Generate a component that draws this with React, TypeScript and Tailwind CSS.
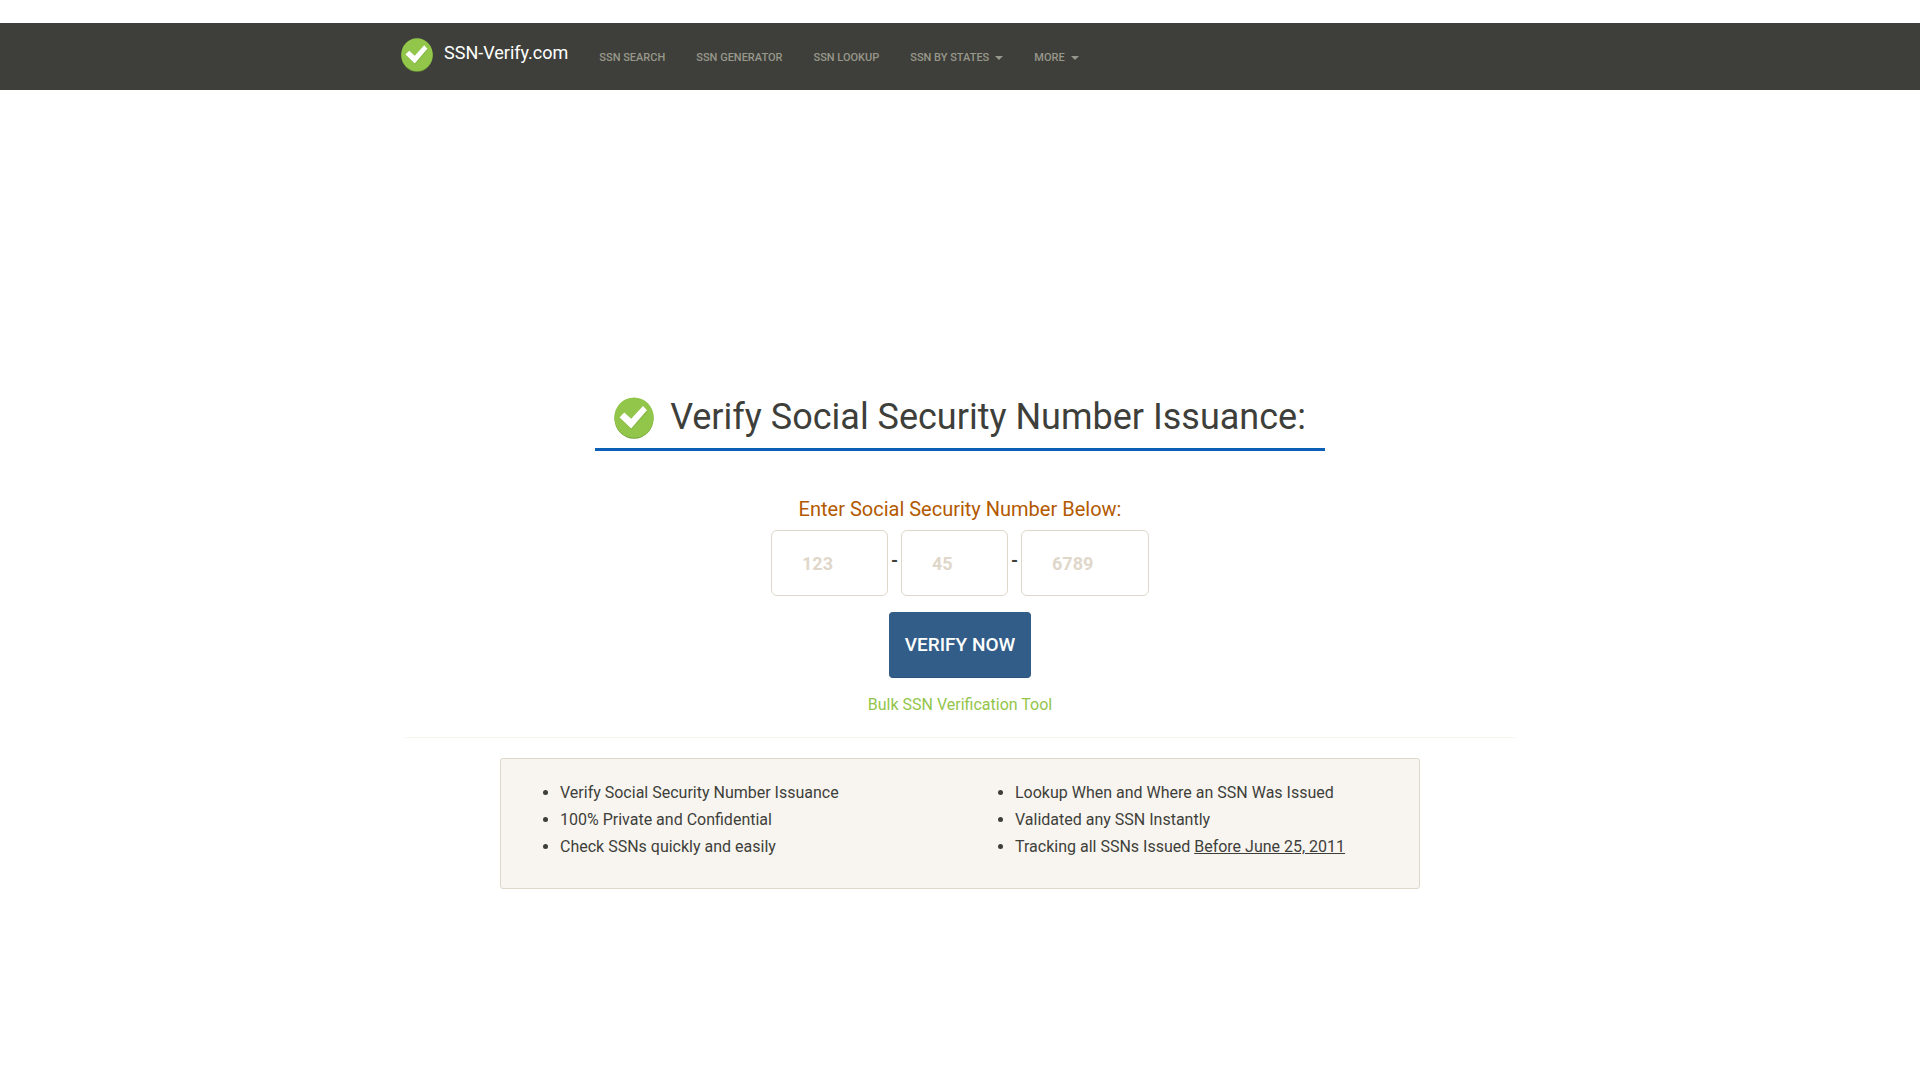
import { useState } from "react";

const navLinks = ["SSN Search", "SSN Generator", "SSN Lookup"];
const navMenus = ["SSN by States", "More"];

const parts = [
  { id: "area", label: "First three digits", placeholder: "123", max: 3, width: "w-[117px]" },
  { id: "group", label: "Middle two digits", placeholder: "45", max: 2, width: "w-[107px]" },
  { id: "serial", label: "Last four digits", placeholder: "6789", max: 4, width: "w-32" },
];

function CheckLogo({ className }: { className: string }) {
  return (
    <svg viewBox="0 0 40 42" preserveAspectRatio="none" className={className} aria-hidden="true">
      <ellipse cx="20" cy="21.4" rx="19.6" ry="20.4" fill="#72a036" />
      <ellipse cx="20" cy="20.6" rx="19.6" ry="20.2" fill="#92c64a" />
      <path d="M6 21.4 10.5 17 17.5 22 29 10 33.6 14.4 17.5 32.6Z" fill="#82b341" />
      <path d="M5.6 20.4 10.2 15.6 17.2 21.8 29 9 33 13.2 17.2 31.4Z" fill="#fff" />
    </svg>
  );
}

function Navbar() {
  return (
    <nav className="mt-[23px] bg-[#3e3f3a]">
      <div className="mx-auto flex h-[67px] max-w-[1140px] items-start px-[11px]">
        <a href="#" className="flex text-lg leading-5 text-white">
          <CheckLogo className="mt-[15px] mr-[11px] h-[34px] w-8" />
          <span className="mt-5">SSN-Verify.com</span>
        </a>
        <ul className="mt-[25px] ml-4 flex gap-px text-[11px] leading-5 font-medium text-[#98978b] uppercase">
          {navLinks.map((text) => (
            <li key={text}>
              <a href="#" className="block px-[15px] hover:text-white">
                {text}
              </a>
            </li>
          ))}
          {navMenus.map((text) => (
            <li key={text}>
              <button
                type="button"
                aria-haspopup="true"
                className="flex items-center gap-[6px] px-[15px] uppercase hover:text-white"
              >
                {text}
                <span className="border-x-4 border-t-4 border-x-transparent" />
              </button>
            </li>
          ))}
        </ul>
      </div>
    </nav>
  );
}

function VerifyForm() {
  const [values, setValues] = useState<Record<string, string>>({});

  return (
    <form className="flex flex-col items-center" onSubmit={(e) => e.preventDefault()}>
      <fieldset className="flex flex-col items-center">
        <legend className="mx-auto mb-[7px] text-xl leading-7 text-[#b35900]">
          Enter Social Security Number Below:
        </legend>
        <div className="flex">
          {parts.map((part, i) => (
            <div key={part.id} className="flex">
              {i > 0 && (
                <span className="w-[13px] pt-[17px] text-center text-lg leading-7 font-bold">-</span>
              )}
              <input
                aria-label={part.label}
                inputMode="numeric"
                maxLength={part.max}
                placeholder={part.placeholder}
                value={values[part.id] ?? ""}
                onChange={(e) => setValues({ ...values, [part.id]: e.target.value })}
                className={`${part.width} h-[66px] rounded-md border border-[#dfd7ca] px-[30px] text-lg font-bold placeholder:text-[#dfd7ca]`}
              />
            </div>
          ))}
        </div>
      </fieldset>
      <button
        type="submit"
        className="mt-4 h-[66px] rounded border border-[#325d88] border-b-[#2c527a] bg-[#325d88] px-[15px] text-[19px] leading-7 font-medium text-white uppercase"
      >
        Verify Now
      </button>
      <a href="#" className="mt-[13px] text-base leading-[27px] text-[#93c54b] hover:underline">
        Bulk SSN Verification Tool
      </a>
    </form>
  );
}

function Features() {
  return (
    <div className="mx-auto mt-5 grid w-full max-w-[920px] grid-cols-2 rounded-[3px] border border-[#dfd7ca] bg-[#f8f5f0] px-1 pt-5 pb-7 text-base leading-[27px]">
      <ul className="list-disc pl-[55px]">
        <li>Verify Social Security Number Issuance</li>
        <li>100% Private and Confidential</li>
        <li>Check SSNs quickly and easily</li>
      </ul>
      <ul className="list-disc pl-[55px]">
        <li>Lookup When and Where an SSN Was Issued</li>
        <li>Validated any SSN Instantly</li>
        <li>
          Tracking all SSNs Issued <u>Before June 25, 2011</u>
        </li>
      </ul>
    </div>
  );
}

export default function App() {
  return (
    <div className="font-[Roboto,sans-serif] text-[#3e3f3a]">
      <Navbar />
      <main className="mx-auto max-w-[1140px] px-[15px] pt-[305px] pb-16">
        <h1 className="mx-auto mb-11 flex w-fit items-center border-b-[3px] border-[#0b5fb5] px-[19px] pb-2 text-4xl leading-[45px]">
          <CheckLogo className="mr-4 h-[42px] w-10" />
          Verify Social Security Number Issuance:
        </h1>
        <VerifyForm />
        <hr className="mt-[19px] border-[#f8f5f0]" />
        <Features />
      </main>
    </div>
  );
}
